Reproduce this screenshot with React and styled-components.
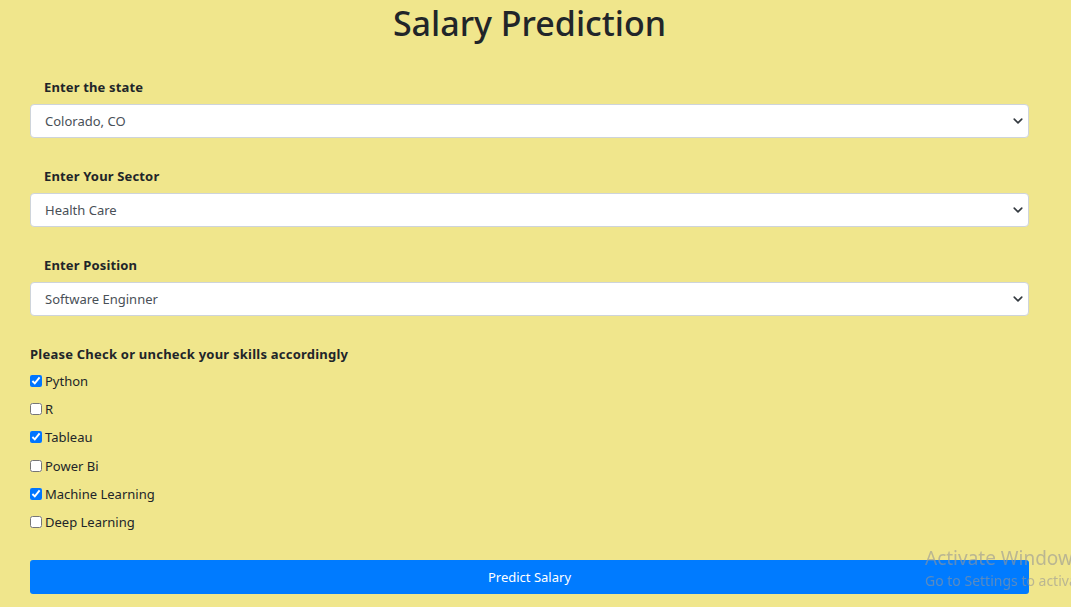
import React from "react";
import styled, { createGlobalStyle } from "styled-components";

const Global = createGlobalStyle`
  html, body { margin: 0; padding: 0; }
  body {
    background: #f0e68c;
    font-family: "Noto Sans", "Open Sans", sans-serif;
    color: #212529;
    overflow: hidden;
  }
`;

const Page = styled.div`
  width: 1071px;
  height: 607px;
  box-sizing: border-box;
  padding: 0 42px 0 30px;
`;

const Title = styled.h1`
  margin: 0;
  padding-top: 2px;
  height: 46px;
  text-align: center;
  font-size: 34px;
  font-weight: 500;
  line-height: 42px;
  color: #212529;
`;

const Form = styled.form`
  display: flex;
  flex-direction: column;
  padding-top: 30px;
`;

const Group = styled.div`
  display: flex;
  flex-direction: column;
  margin-bottom: 29px;
`;

const Label = styled.label`
  padding-left: 14px;
  font-size: 13px;
  font-weight: 700;
  line-height: 18px;
  letter-spacing: 0.15px;
  margin-bottom: 8px;
`;

const SelectWrap = styled.div`
  position: relative;
`;

const Select = styled.select`
  appearance: none;
  -webkit-appearance: none;
  width: 100%;
  height: 34px;
  box-sizing: border-box;
  border: 1px solid #ced4da;
  border-radius: 4px;
  background: #fff;
  padding: 0 30px 0 14px;
  font-family: inherit;
  font-size: 13px;
  color: #495057;
`;

const Chevron = styled.svg`
  position: absolute;
  right: 6px;
  top: 12px;
  width: 10px;
  height: 10px;
  pointer-events: none;
`;

const SkillsTitle = styled.div`
  font-size: 13px;
  font-weight: 700;
  line-height: 18px;
  letter-spacing: 0.23px;
  margin-top: 0;
  margin-bottom: 4px;
`;

const CheckRow = styled.label`
  display: flex;
  align-items: center;
  height: 28.2px;
  font-size: 13px;
  color: #212529;
`;

const Check = styled.input`
  width: 12px;
  height: 12px;
  margin: 0 3px 0 0;
  accent-color: #0075ff;
`;

const Button = styled.button`
  margin-top: 24px;
  height: 34px;
  width: 100%;
  border: none;
  border-radius: 3px;
  background: #007bff;
  color: #fff;
  font-family: inherit;
  font-size: 13px;
`;

const Watermark = styled.div`
  position: fixed;
  left: 925px;
  top: 545px;
  white-space: nowrap;
  color: rgba(150, 150, 150, 0.6);
  font-family: "Noto Sans", sans-serif;
  pointer-events: none;
`;

const WmBig = styled.div`
  font-size: 19px;
  line-height: 26px;
`;

const WmSmall = styled.div`
  font-size: 14px;
  line-height: 20px;
`;

const selects = [
  { label: "Enter the state", value: "Colorado, CO" },
  { label: "Enter Your Sector", value: "Health Care" },
  { label: "Enter Position", value: "Software Enginner" },
];

const skills = [
  ["Python", true],
  ["R", false],
  ["Tableau", true],
  ["Power Bi", false],
  ["Machine Learning", true],
  ["Deep Learning", false],
];

export default function App() {
  return (
    <>
      <Global />
      <Page>
        <Title>Salary Prediction</Title>
        <Form onSubmit={(e) => e.preventDefault()}>
          {selects.map((s) => (
            <Group key={s.label}>
              <Label>{s.label}</Label>
              <SelectWrap>
                <Select defaultValue={s.value}>
                  <option>{s.value}</option>
                </Select>
                <Chevron viewBox="0 0 16 16">
                  <path d="M2 5l6 6 6-6" fill="none" stroke="#343a40" strokeWidth="2.6" strokeLinecap="round" strokeLinejoin="round" />
                </Chevron>
              </SelectWrap>
            </Group>
          ))}
          <SkillsTitle>Please Check or uncheck your skills accordingly</SkillsTitle>
          {skills.map(([name, on]) => (
            <CheckRow key={name}>
              <Check type="checkbox" defaultChecked={on} />
              {name}
            </CheckRow>
          ))}
          <Button type="submit">Predict Salary</Button>
        </Form>
      </Page>
      <Watermark>
        <WmBig>Activate Windows</WmBig>
        <WmSmall>Go to Settings to activate Windows.</WmSmall>
      </Watermark>
    </>
  );
}
